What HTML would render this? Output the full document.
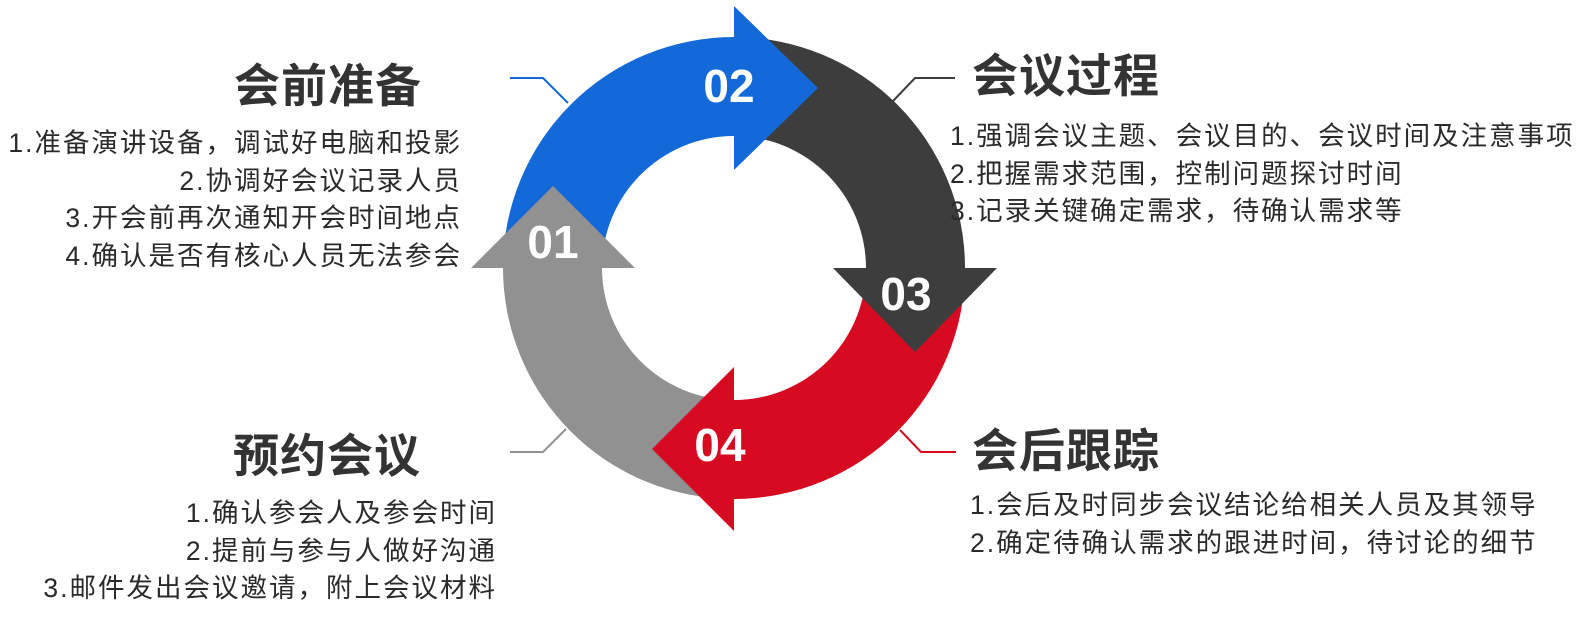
<!DOCTYPE html>
<html><head><meta charset="utf-8"><style>
body{margin:0;width:1586px;height:638px;background:#fff;position:relative;overflow:hidden;font-family:"Liberation Sans","Noto Sans CJK SC",sans-serif;color:#2e2e2e}
.t{position:absolute;font-size:46px;font-weight:bold;color:#333;line-height:50px;white-space:nowrap;letter-spacing:1px}
.b{position:absolute;font-size:26.5px;line-height:37.5px;letter-spacing:2px;white-space:nowrap;color:#2a2a2a}
.r{text-align:right}
svg{position:absolute;left:0;top:0}
</style></head><body>
<svg width="1586" height="638">
<path d="M503 268 A231 231 0 0 1 734 37 L734 136 A132 132 0 0 0 602 268 Z" fill="#1469d8"/>
<path d="M734 37 A231 231 0 0 1 965 268 L866 268 A132 132 0 0 0 734 136 Z" fill="#3d3d3d"/>
<path d="M965 268 A231 231 0 0 1 734 499 L734 400 A132 132 0 0 0 866 268 Z" fill="#d60a20"/>
<path d="M734 499 A231 231 0 0 1 503 268 L602 268 A132 132 0 0 0 734 400 Z" fill="#919191"/>
<polygon points="734,6 818,88 734,170" fill="#1469d8"/>
<polygon points="833,268 997,268 915,352" fill="#3d3d3d"/>
<polygon points="734,367 734,531 652,449" fill="#d60a20"/>
<polygon points="471,268 635,268 553,186" fill="#919191"/>
<g font-family="Liberation Sans" font-weight="bold" font-size="46" fill="#fff" text-anchor="middle">
<text x="729" y="102">02</text>
<text x="553" y="258">01</text>
<text x="906" y="310">03</text>
<text x="720" y="461">04</text>
</g>
<polyline points="510,78 543,78 568,103" fill="none" stroke="#1469d8" stroke-width="2"/>
<polyline points="893,101 915,78 955,78" fill="none" stroke="#3d3d3d" stroke-width="2"/>
<polyline points="510,452 543,452 566,429" fill="none" stroke="#919191" stroke-width="2"/>
<polyline points="900,430 921,452 956,452" fill="none" stroke="#d60a20" stroke-width="2"/>
</svg>

<div class="t" style="left:234px;top:61px">会前准备</div>
<div class="b r" style="right:1124px;top:125px">1.准备演讲设备，调试好电脑和投影<br>2.协调好会议记录人员<br>3.开会前再次通知开会时间地点<br>4.确认是否有核心人员无法参会</div>

<div class="t" style="left:972px;top:51px">会议过程</div>
<div class="b" style="left:950px;top:118px">1.强调会议主题、会议目的、会议时间及注意事项<br>2.把握需求范围，控制问题探讨时间<br>3.记录关键确定需求，待确认需求等</div>

<div class="t" style="left:233px;top:431px">预约会议</div>
<div class="b r" style="right:1089px;top:495px">1.确认参会人及参会时间<br>2.提前与参与人做好沟通<br>3.邮件发出会议邀请，附上会议材料</div>

<div class="t" style="left:972px;top:426px">会后跟踪</div>
<div class="b" style="left:970px;top:487px">1.会后及时同步会议结论给相关人员及其领导<br>2.确定待确认需求的跟进时间，待讨论的细节</div>
</body></html>
